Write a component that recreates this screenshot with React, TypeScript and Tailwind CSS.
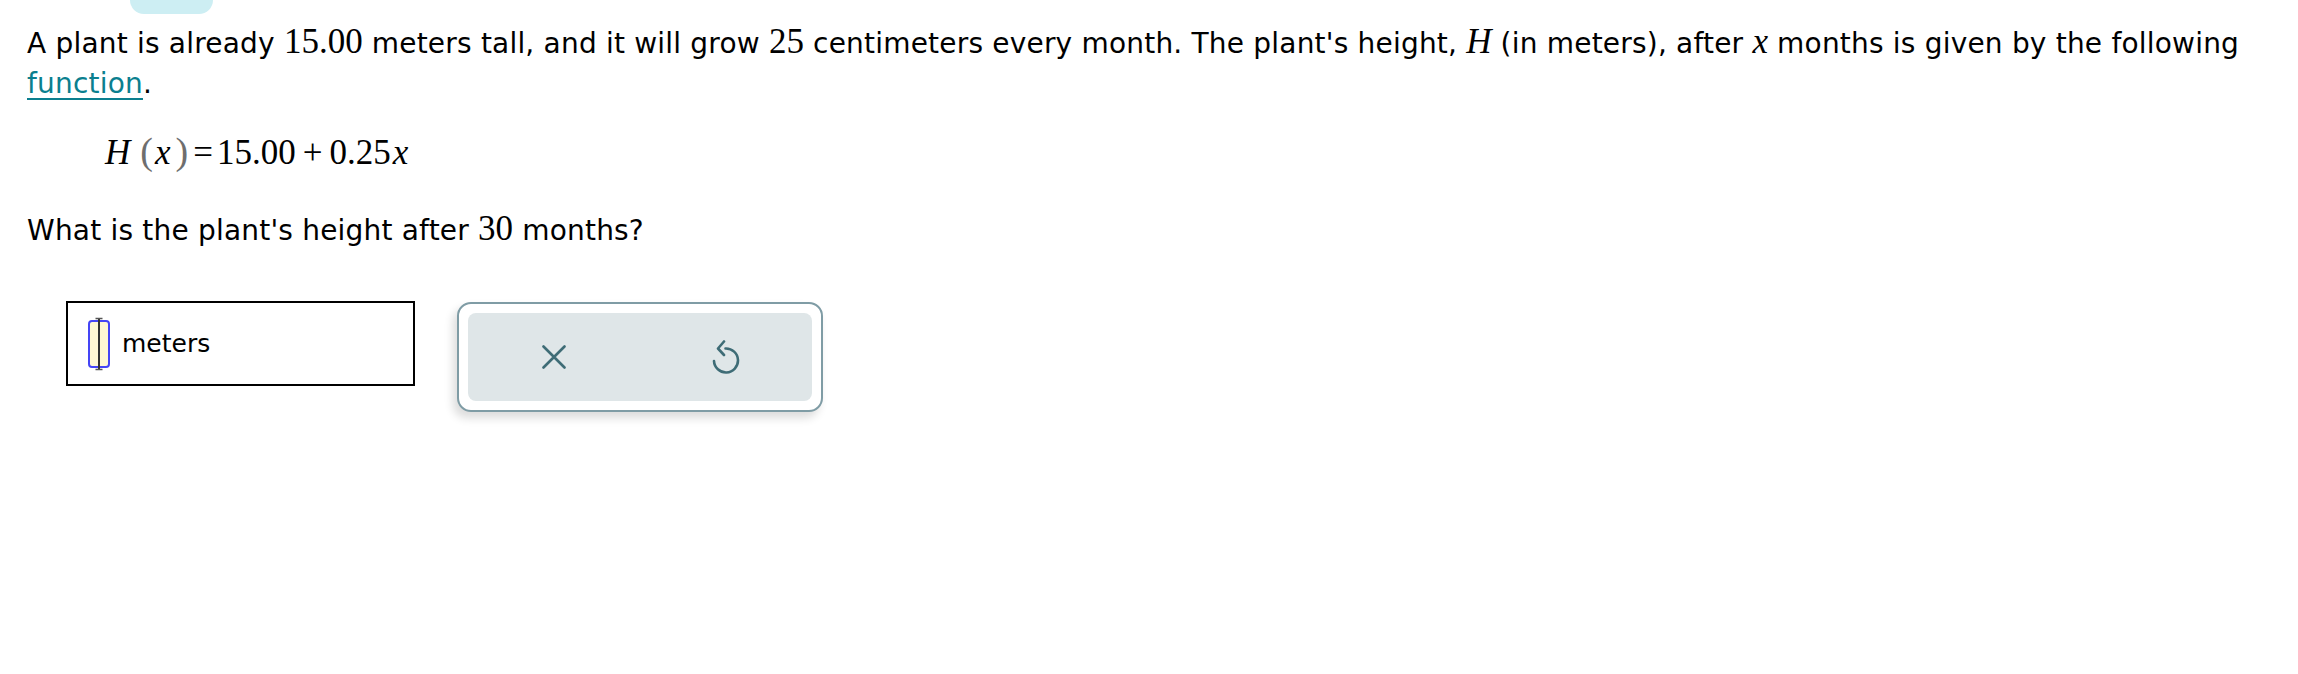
import { useState } from "react"

function Num({ children }: { children: React.ReactNode }) {
  return <span className="font-['Liberation_Serif',serif] text-[35px] leading-none tracking-normal">{children}</span>
}

function Var({ children }: { children: React.ReactNode }) {
  return <span className="font-['Liberation_Serif',serif] text-[35px] italic leading-none tracking-normal">{children}</span>
}

function AnswerCursor() {
  return (
    <svg width="22" height="54" viewBox="0 0 22 54" className="shrink-0">
      <rect x="1" y="4" width="20" height="46" rx="3" fill="#fff8d4" stroke="#4545f5" strokeWidth="2" />
      <line x1="11" y1="2" x2="11" y2="52" stroke="#333" strokeWidth="2" />
      <line x1="7.5" y1="1.5" x2="14.5" y2="1.5" stroke="#555" strokeWidth="1.5" />
      <line x1="7.5" y1="52.5" x2="14.5" y2="52.5" stroke="#555" strokeWidth="1.5" />
    </svg>
  )
}

export default function App() {
  const [value] = useState("")

  return (
    <div className="min-h-screen bg-white font-['DejaVu_Sans',sans-serif] text-[28px] tracking-[0.2px] text-black">
      <div className="ml-[130px] h-[14px] w-[83px] rounded-b-[14px] bg-[#cdeef3]" />

      <p className="mt-[10px] px-[27px] leading-[40px]">
        A plant is already <Num>15.00</Num> meters tall, and it will grow <Num>25</Num> centimeters every month. The
        plant's height, <Var>H</Var> (in meters), after <Var>x</Var> months is given by the following{" "}
        <a href="#" className="text-[#0b7f8f] underline decoration-2 underline-offset-[5px]">
          function
        </a>
        .
      </p>

      <div className="mt-[27px] pl-[105px] font-['Liberation_Serif',serif] text-[35px] leading-[40px] tracking-normal">
        <span className="italic">H</span>
        <span className="ml-[10px] text-[38px] text-[#6e6e6e]">(</span>
        <span className="ml-[2px] italic">x</span>
        <span className="ml-[5px] text-[38px] text-[#6e6e6e]">)</span>
        <span className="ml-[5px] mr-[4px]">=</span>
        <span>15.00</span>
        <span className="mx-[7px]">+</span>
        <span>0.25</span>
        <span className="ml-[2px] italic">x</span>
      </div>

      <p className="mt-[38px] px-[27px] leading-[40px]">
        What is the plant's height after <Num>30</Num> months?
      </p>

      <div className="ml-[66px] mt-[50px] flex items-start gap-[42px]">
        <div className="flex h-[85px] w-[349px] items-center border-2 border-black pl-[20px]">
          <AnswerCursor />
          <span className="ml-[12px] text-[25px] leading-[40px] tracking-normal">{value}meters</span>
        </div>

        <div className="mt-[1px] h-[110px] w-[366px] rounded-[14px] border-2 border-[#7f9ca5] bg-white p-[9px] shadow-[-4px_6px_10px_rgba(0,0,0,0.14)]">
          <div className="flex h-full rounded-[8px] bg-[#dfe6e8]">
            <button className="flex flex-1 items-center justify-center">
              <svg width="24" height="24" viewBox="0 0 24 24">
                <path d="M1.5 1.5 L22.5 22.5 M22.5 1.5 L1.5 22.5" stroke="#3e6c76" strokeWidth="2.6" strokeLinecap="round" />
              </svg>
            </button>
            <button className="flex flex-1 items-center justify-center">
              <svg width="28" height="34" viewBox="0 0 28 34" fill="none">
                <path d="M13.5 8.5 A12 12 0 1 1 2 21" stroke="#3e6c76" strokeWidth="2.6" strokeLinecap="round" />
                <path d="M12 1.5 L6 8.5 L12 15" stroke="#3e6c76" strokeWidth="2.6" strokeLinecap="round" strokeLinejoin="round" />
              </svg>
            </button>
          </div>
        </div>
      </div>
    </div>
  )
}
